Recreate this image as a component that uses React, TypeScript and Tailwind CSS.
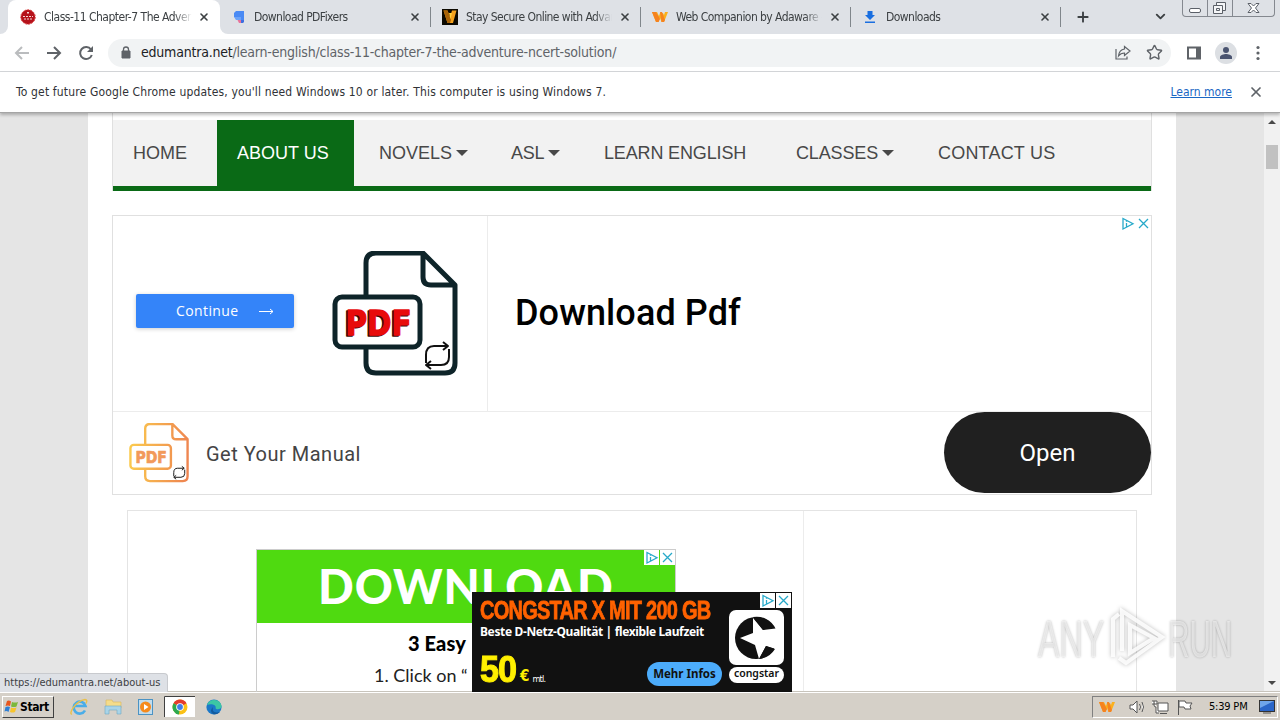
import React from 'react';
import { ChevronDown, Plus, Star, X } from 'lucide-react';

interface Tab {
  title: string;
  icon: React.ReactNode;
  box: string;
}

const SealIcon = () => (
  <svg width="16" height="16" viewBox="0 0 16 16" className="shrink-0">
    <circle cx="8" cy="8" r="7.2" fill="#b5121b" stroke="#d63a3a" strokeDasharray="2 1" />
    <path d="M3 7.500h10M4 10h8M7 3.500h2M8 3v3" stroke="#f4d6d6" strokeWidth="1" strokeDasharray="2 1" />
  </svg>
);

const FixersIcon = () => (
  <svg width="16" height="16" viewBox="0 0 16 16">
    <path d="M6 2h8v9l-3 2V8H4V4z" fill="#4a8af4" />
    <path d="M7 10h4v4H9z" fill="#e8739b" />
    <path d="M4 8h7v3H6z" fill="#6ba2f8" />
    <path d="M11 11h3v2l-1 1h-2z" fill="#3f6fe0" />
  </svg>
);

const DarkWIcon = () => (
  <svg width="16" height="16" viewBox="0 0 16 16">
    <path d="M0 0h16v16H0z" fill="#0c0900" />
    <path d="M1.500 1.500h4L8 8l2-6.500h4.500L11 14H5.500z" fill="#f5a11c" />
    <path d="M5.500 1.500L9 11l-1 3H5.500l-4-12.500z" fill="#a86206" />
    <path d="M7 4l1.500 6 1.500-6z" fill="#ffcf3a" />
  </svg>
);

const WIcon = () => (
  <svg width="16" height="16" viewBox="0 0 16 16">
    <path d="M0 3h5l2 4 1-3h3l1 2 1-3h3l-4 10h-2.500L8 9l-1.500 4H4z" fill="#fbb01c" />
    <path d="M0 3h4l4 7-1.500 3H4zM8 3h2l3 8-1 2H9.500z" fill="#f58220" />
  </svg>
);

const DownloadIcon = () => (
  <svg width="16" height="16" viewBox="0 0 16 16">
    <path d="M5.500 2h5v4H13l-5 5-5-5h2.500zM3 12.500h10V14H3z" fill="#1a6fe0" />
  </svg>
);

const tabs: Tab[] = [
  { title: 'Download PDFixers', icon: <FixersIcon />, box: 'w-[211px] pl-2.5' },
  { title: 'Stay Secure Online with Advan', icon: <DarkWIcon />, box: 'w-[210px] pl-[11px]' },
  { title: 'Web Companion by Adaware -', icon: <WIcon />, box: 'w-[210px] pl-[11px]' },
  { title: 'Downloads', icon: <DownloadIcon />, box: 'w-[210px] pl-[11px]' },
];

const TabStrip = () => (
  <div className="flex h-[34px] bg-white text-[12px] text-[#3c4043]">
    <div className="w-2 rounded-br-lg bg-[#dee1e6]" />
    <div className="flex w-[212px] items-center bg-[#dee1e6]">
      <div className="flex h-full w-full items-center rounded-t-lg bg-white pl-3">
        <SealIcon />
        <span className="ml-2 w-[148px] whitespace-nowrap tracking-[-0.5px] mask-r-from-88%">Class-11 Chapter-7 The Adver</span>
        <X size={12} strokeWidth={3.2} className="ml-1.5 shrink-0" />
      </div>
    </div>
    <div className="flex grow rounded-bl-lg bg-[#dee1e6]">
      {tabs.map((tab) => (
        <div key={tab.title} className={`flex shrink-0 items-center ${tab.box}`}>
          <span className="shrink-0">{tab.icon}</span>
          <span className="ml-2 w-[146px] whitespace-nowrap tracking-[-0.55px] mask-r-from-88%">{tab.title}</span>
          <X size={12} strokeWidth={3.2} className="ml-auto mr-[9px] shrink-0" />
          <span className="h-5 w-px bg-[#80868b]" />
        </div>
      ))}
      <Plus size={16} strokeWidth={2.8} className="ml-[14px] mt-[9px]" />
      <ChevronDown size={15} strokeWidth={3} className="ml-[62px] mt-[9px]" />
      <div className="ml-[14px] flex h-[17px] w-[93px] rounded-b border border-t-0 border-[#84888f] text-[#5b6068]">
        <svg width="91" height="16" viewBox="0 0 91 16" fill="none" stroke="currentColor">
          <path d="M24.500 0v16M49.500 0v16" stroke="#84888f" />
          <rect x="6.500" y="8.500" width="11" height="4" rx="1.500" fill="#fff" />
          <path d="M33.500 5.500v-3h9v8h-3M30.500 5.500h9v8h-9zM33.500 8.500h3v2h-3z" fill="#f4f5f7" />
          <path d="M65 3.500h3l2.500 2.500L73 3.500h3l-3.500 4.500 3.500 4.500h-3L70.500 10 68 12.500h-3l3.500-4.500z" fill="#fff" />
        </svg>
      </div>
    </div>
  </div>
);

const Toolbar = () => (
  <div className="flex h-[38px] items-center border-b border-[#d5d7da] bg-white text-[#5f6368]">
    <svg className="ml-[14px]" width="84" height="18" viewBox="0 0 84 18" fill="none" strokeWidth="2">
      <path d="M15 9H2M8 3L2 9l6 6" stroke="#babcbe" />
      <path d="M33 9h13M40 3l6 6-6 6" stroke="currentColor" />
      <path d="M77 5.500A6 6 0 1 0 77.800 11" stroke="currentColor" />
      <path d="M79 2v6h-6z" fill="currentColor" />
    </svg>
    <div className="ml-[10px] flex h-7 w-[1063px] items-center rounded-full bg-[#f1f3f4] pr-2">
      <svg width="10" height="13" viewBox="0 0 10 13" className="ml-[13px]">
        <path d="M1 5h8v7H1z" fill="currentColor" stroke="currentColor" strokeLinejoin="round" />
        <path d="M2.500 5V3.500a2.500 2.500 0 0 1 5 0V5" fill="none" stroke="currentColor" strokeWidth="1.300" />
      </svg>
      <span className="ml-[10px] whitespace-nowrap text-[14px] tracking-[-0.21px]">
        <span className="text-[#202124]">edumantra.net</span>/learn-english/class-11-chapter-7-the-adventure-ncert-solution/
      </span>
      <svg className="ml-auto" width="18" height="16" viewBox="0 0 18 16" fill="none" stroke="currentColor" strokeWidth="1.200">
        <path d="M2 4v10h11v-2.500M10.500 4V1.500L16 6l-5.500 4.500V8C8 8 6 9 4.500 11c.4-4 2.500-6.500 6-7z" />
      </svg>
      <Star size={17} strokeWidth={2} className="ml-[14px]" />
    </div>
    <svg className="ml-[15px]" width="16" height="16" viewBox="0 0 16 16">
      <path d="M1 1.500h14v13H1z" fill="currentColor" />
      <path d="M3 3.500h7v9H3z" fill="#fff" />
    </svg>
    <svg className="ml-[13px]" width="22" height="22" viewBox="0 0 22 22">
      <circle cx="11" cy="11" r="11" fill="#dcdfe3" />
      <circle cx="11" cy="8" r="3" fill="#4a5470" />
      <path d="M5 17v-2c0-2 4-3 6-3s6 1 6 3v2z" fill="#4a5470" />
    </svg>
    <svg className="ml-[19px]" width="4" height="16" viewBox="0 0 4 16" fill="currentColor">
      <circle cx="2" cy="2.500" r="1.600" />
      <circle cx="2" cy="8" r="1.600" />
      <circle cx="2" cy="13.500" r="1.600" />
    </svg>
  </div>
);

const InfoBar = () => (
  <div className="z-10 flex h-[41px] items-center border-b border-[#a5a5a5] bg-white pl-4 text-[12px] text-[#303236] shadow-[0_2px_3px_rgba(0,0,0,0.25)]">
    <span className="whitespace-nowrap tracking-[0.16px]">To get future Google Chrome updates, you'll need Windows 10 or later. This computer is using Windows 7.</span>
    <span className="ml-auto text-[#1a67c4] underline">Learn more</span>
    <X size={16} strokeWidth={2.6} className="ml-[16px] mr-[16px] text-[#5f6368]" />
  </div>
);

const Caret = () => <span className="ml-1 border-x-[6px] border-t-[6px] border-x-transparent border-t-[#484848]" />;

const menu = [
  { label: 'HOME', caret: false, box: 'w-[104px] pl-5' },
  { label: 'ABOUT US', caret: false, box: 'w-[137px] pl-5 bg-[#0a6a16] text-white' },
  { label: 'NOVELS', caret: true, box: 'w-[132px] pl-[25px]' },
  { label: 'ASL', caret: true, box: 'w-[93px] pl-[25px] tracking-[-0.3px]' },
  { label: 'LEARN ENGLISH', caret: false, box: 'w-[192px] pl-[25px] tracking-[-0.15px]' },
  { label: 'CLASSES', caret: true, box: 'w-[142px] pl-[25px] tracking-[-0.15px]' },
  { label: 'CONTACT US', caret: false, box: 'w-[170px] pl-[25px] tracking-[0.2px]' },
];

const AdChoices = ({ boxed }: { boxed?: boolean }) => (
  <svg width="32" height="16" viewBox="0 0 32 16" fill="none" stroke="#27a9c9" strokeWidth="1.300">
    {boxed && <path d="M0 0h15v15H0zM16 0h15v15H16z" fill="#fff" stroke="none" />}
    <path d="M3 2.500v10.500l10-5.300zM6.500 7v4M6.500 4.500v1.300" />
    <path d="M19 3l9 9M28 3l-9 9" />
  </svg>
);

interface PdfProps {
  size: number;
  line: string;
  label: string;
  shadow?: string;
}

const PdfFile = ({ size, line, label, shadow }: PdfProps) => (
  <svg width={size} height={size} viewBox="0 0 126 126" fill="none" stroke={line} strokeWidth="5" strokeLinejoin="round">
    {line.startsWith('url') && (
      <defs>
        <linearGradient id="amber" gradientUnits="userSpaceOnUse" x1="0" y1="60" x2="126" y2="70">
          <stop offset="0" stopColor="#fbcb4e" />
          <stop offset="1" stopColor="#ee8450" />
        </linearGradient>
      </defs>
    )}
    <path d="M34 45V12Q34 2 44 2H91L123 34V112Q123 122 113 122H44Q34 122 34 112V97M91 2V26Q91 34 99 34H123" />
    <rect x="3" y="46" width="85" height="50" rx="7" fill="#fff" />
    <g fontFamily="DejaVu Sans" fontWeight="bold" fontSize="34" strokeWidth="1.500">
      {shadow && (
        <text x="12" y="84.500" textLength="66" lengthAdjust="spacingAndGlyphs" fill={shadow} stroke={shadow}>PDF</text>
      )}
      <text x="13.500" y="84" textLength="66" lengthAdjust="spacingAndGlyphs" fill={label} stroke={label}>PDF</text>
    </g>
    <path d="M94 112V104Q94 95 102 95H115M111 91l5 4-5 4M117 98V106Q117 114 109 114H95M99 110l-5 4 5 4" stroke="#111" strokeWidth="2" />
  </svg>
);

const PdfAd = () => (
  <div className="mt-6 flex h-[280px] flex-col border border-[#e0e0e0] bg-white font-[Roboto,sans-serif]">
    <div className="flex h-[196px] border-b border-[#ececec]">
      <div className="flex w-[375px] items-center border-r border-[#ececec] pl-[23px]">
        <div className="mt-[-6px] flex h-[34px] w-[158px] items-center rounded-[2px] bg-[#3484f9] pl-10 font-['Open_Sans',sans-serif] text-[14px] tracking-[0.4px] text-white shadow-[0_1px_4px_rgba(0,0,0,0.2)]">
          Continue
          <svg className="ml-[20px]" width="15" height="8" viewBox="0 0 15 8" fill="none" stroke="#fff">
            <path d="M0 4.500h14M11 2l3 2.500L11 7" />
          </svg>
        </div>
        <div className="ml-[38px]">
          <PdfFile size={126} line="#0e2429" label="#e80b0b" shadow="#3a0808" />
        </div>
      </div>
      <div className="flex grow items-center pb-0.5 pl-[27px] text-[36px] font-medium tracking-[0.1px] text-black">Download Pdf</div>
      <div className="w-[31px]">
        <AdChoices />
      </div>
    </div>
    <div className="flex h-[82px] items-center pl-4">
      <PdfFile size={60} line="url(#amber)" label="#f2995a" />
      <span className="ml-[17px] mt-0.5 text-[20px] tracking-[0.5px] text-[#444]">Get Your Manual</span>
      <span className="ml-auto flex h-[81px] w-[207px] items-center justify-center self-start rounded-full bg-[#202020] text-[24px] text-white">Open</span>
    </div>
  </div>
);

const DownloadAd = () => (
  <div className="mx-[15px] mt-[15px] flex h-[190px] border border-b-0 border-[#e4e4e4]">
    <div className="w-[676px] border-r border-[#ececec] pl-[128px] pt-[38px]">
      <div className="relative h-[150px] w-[420px] border border-[#ccc] font-[Lato,sans-serif] text-[#222]">
        <div className="flex h-[73px] items-center bg-[#4fda10] pl-[61px] text-[47px] font-black tracking-[0.9px] text-white">DOWNLOAD</div>
        <div className="mt-[5px] pl-[151px] text-[20px] font-black tracking-[0.1px] text-black">3 Easy</div>
        <div className="mt-1 pl-[117px] text-[18px]">1. Click on “</div>
        <div className="absolute -right-[1px] top-0 h-4">
          <AdChoices boxed />
        </div>
      </div>
    </div>
  </div>
);

const CongstarAd = () => (
  <div className="absolute left-[472px] top-[592px] z-20 flex h-[100px] w-[320px] bg-[#111] text-white">
    <div className="flex w-[257px] flex-col pl-2">
      <div className="mt-[5px] h-[27px] origin-left scale-x-[0.77] whitespace-nowrap font-['Liberation_Sans_Narrow','Liberation_Sans',sans-serif] text-[26px] font-bold leading-[27px] tracking-[-1px] text-[#ff6200] [-webkit-text-stroke:0.8px_#ff6200]">CONGSTAR X MIT 200 GB</div>
      <div className="whitespace-nowrap font-['Noto_Sans',sans-serif] text-[12px] font-bold leading-[16px] tracking-[-0.36px]">Beste D-Netz-Qualität | flexible Laufzeit</div>
      <div className="mt-[14px] flex items-end">
        <span className="w-[40px] origin-left scale-x-[0.95] font-['Liberation_Sans',sans-serif] text-[36px] font-bold leading-[32px] tracking-[-1px] text-[#fff000] [-webkit-text-stroke:1px_#fff000]">50</span>
        <span className="text-[15px] font-bold leading-[20px] text-[#fff000]">€</span>
        <span className="ml-[3px] text-[9px] leading-[14px] tracking-[-0.7px]">mtl.</span>
        <span className="ml-auto mr-[7px] flex h-6 w-[75px] items-center justify-center rounded-full bg-[#4cacfb] font-['Noto_Sans',sans-serif] text-[11.5px] font-bold text-[#111]">Mehr Infos</span>
      </div>
    </div>
    <div className="mt-[18px] flex w-[55px] flex-col gap-0.5">
      <svg width="55" height="55" viewBox="0 0 55 55">
        <rect width="55" height="55" rx="7" fill="#fff" />
        <circle cx="27" cy="28" r="21" fill="#111" />
        <path d="M24 8L34 20 50 14v26L37 36 30 49 26 35 11 28 24 23z" fill="#fff" />
        <path d="M34 20L46.500 18.500A21 21 0 0 0 24 7zM37 36L46 39A21 21 0 0 1 30 49z" fill="#111" />
      </svg>
      <span className="flex h-[16px] items-center justify-center rounded-full bg-white pb-0.5 font-['Noto_Sans',sans-serif] text-[10.500px] font-semibold text-[#111]">congstar</span>
    </div>
    <div className="absolute right-0 top-px">
      <AdChoices boxed />
    </div>
  </div>
);

const Page = () => (
  <div className="flex h-[579px] overflow-hidden bg-[#e5e5e5]">
    <div className="ml-[88px] w-[1088px] bg-white px-6">
      <div className="border-x border-[#e0e0e0] pt-[7px]">
        <div className="flex h-[66px] bg-[#f2f2f2] font-['Liberation_Sans',sans-serif] text-[18px] text-[#484848]">
          {menu.map((item) => (
            <div key={item.label} className={`flex shrink-0 items-center whitespace-nowrap ${item.box}`}>
              {item.label}
              {item.caret && <Caret />}
            </div>
          ))}
        </div>
        <div className="h-[5px] bg-[#0a6a16]" />
      </div>
      <PdfAd />
      <DownloadAd />
    </div>
    <div className="ml-auto flex w-4 flex-col items-center bg-[#f1f1f1] pb-[7px] pt-[7px]">
      <span className="border-x-4 border-b-4 border-x-transparent border-b-[#484848]" />
      <span className="mt-[21px] h-6 w-3 bg-[#c1c1c1]" />
      <span className="mt-auto border-x-4 border-t-4 border-x-transparent border-t-[#484848]" />
    </div>
  </div>
);

const Watermark = () => (
  <div className="absolute left-[1038px] top-[605px] z-10 flex items-center font-['Liberation_Sans_Narrow','Liberation_Sans',sans-serif] text-[52px] leading-[64px] text-white/60 [text-shadow:0_0_3px_rgba(0,0,0,0.3)]">
    <span className="w-[68px] origin-left scale-x-[0.62]">ANY</span>
    <svg width="62" height="68" viewBox="0 0 62 68" fill="none" stroke="#fff" strokeOpacity="0.85" strokeWidth="4" className="shrink-0 drop-shadow-[0_0_2px_rgba(0,0,0,0.3)]">
      <path d="M7 52V14l6-5M16 46V6l40 26-36 26-7-5M24 20v28l24-15z" />
    </svg>
    <span className="w-[66px] origin-left scale-x-[0.57]">RUN</span>
  </div>
);

const StartFlag = () => (
  <svg width="15" height="14" viewBox="0 0 15 14">
    <path d="M3 1q2-1 4 .5L6 6Q4 5 1.500 6z" fill="#e8571e" />
    <path d="M8 2q3 1 6 0l-1.500 4.500q-2.500 1-5.500 0z" fill="#7cb83a" />
    <path d="M1.500 7Q4 6 6 7l-1.500 5q-2-1.500-4-.5z" fill="#2f7fd4" />
    <path d="M7 7.500q2.500 1 5.500 0L11 12q-2.500 1-5 0z" fill="#f7c42c" />
  </svg>
);

const TaskIcons = () => (
  <svg width="156" height="24" viewBox="0 0 156 24" className="ml-[12px]">
    {/* internet explorer */}
    <path d="M19 15.500A6 6 0 1 1 19.500 11H8" fill="none" stroke="#4aade8" strokeWidth="2.600" />
    <path d="M6 19C2 20 9 6 19 4.500q3 0 1 4" fill="none" stroke="#e9c04a" strokeWidth="1.400" />
    {/* explorer */}
    <path d="M40 5h6l1 2h8v6H40z" fill="#f5dc8a" stroke="#d9b55a" strokeWidth=".6" />
    <path d="M39 11h16v8h-4v-4h-8v4h-4z" fill="#a9d4e8" stroke="#6fa9c5" strokeWidth=".6" />
    {/* media player */}
    <rect x="72.500" y="4.500" width="14" height="15" fill="#c2dcec" stroke="#4b93c4" />
    <circle cx="79.500" cy="12" r="5.500" fill="#f68a1c" />
    <path d="M78 9l4.500 3-4.500 3z" fill="#fff" />
    {/* chrome */}
    <path d="M98 1h31v21H98z" fill="#fff" />
    <path d="M98.500 22V1.500H129" fill="none" stroke="#404040" />
    <circle cx="114" cy="12" r="7.500" fill="#fbc116" />
    <path d="M114 12L107.500 8.200A7.500 7.500 0 0 1 120.500 8.200z" fill="#e33b2e" />
    <path d="M114 12L107.500 8.200A7.500 7.500 0 0 0 113 19.500z" fill="#2da94f" />
    <circle cx="114" cy="12" r="3.800" fill="#fff" />
    <circle cx="114" cy="12" r="2.900" fill="#3f7de8" />
    {/* edge */}
    <circle cx="148" cy="12" r="7.600" fill="#1b78c8" />
    <path d="M141 10a7.600 7.600 0 0 1 14.600 1c0 4-6 4-6 2 1-3-4-5-8.600-3z" fill="#3cc6a4" />
    <path d="M147 12q-2 7 7 5-3 3-7 2-4-3 0-7z" fill="#125a9e" />
  </svg>
);

const Taskbar = () => (
  <div className="flex h-7 items-center border-t border-white bg-[#d5d0c8] pt-px shadow-[0_-1px_0_#c8c4bc]">
    <div className="ml-0.5 flex h-[22px] w-[52px] items-center gap-px border border-b-[#404040] border-l-white border-r-[#404040] border-t-white pl-px text-[12px] font-bold tracking-[-0.4px] text-black">
      <StartFlag />
      Start
    </div>
    <TaskIcons />
    <div className="ml-auto mr-0.5 flex h-[22px] w-[186px] items-center border border-b-white border-l-[#808080] border-r-white border-t-[#808080] pl-1.5 text-[11px] text-black">
      <WIcon />
      <svg width="72" height="18" viewBox="0 0 72 18" className="ml-3" fill="#fff" stroke="#555">
        <path d="M3 7h3l4-4v12l-4-4H3zM12.500 6q2 3 0 6M15 4q3 5 0 10" />
        <path d="M31 5h10v8H31zM33 15.500h7M27 3v4q0 2 2 2v6h3M25 3h5v3h-5" />
        <path d="M51.500 2v15M52 3h6l1 2h6l-2 3 1 3h-6l-1-2h-5z" />
      </svg>
      <span className="ml-[10px] whitespace-nowrap tracking-[-0.2px]">5:39 PM</span>
      <svg width="16" height="14" viewBox="0 0 16 14" className="ml-auto mr-0.5">
        <rect x=".5" y=".5" width="15" height="11" fill="#2b66c8" stroke="#333" />
        <path d="M1 1h14L1 8z" fill="#6fa5ea" />
        <path d="M4 13h8" stroke="#555" />
      </svg>
    </div>
  </div>
);

export default function App() {
  return (
    <div className="relative flex h-[720px] w-[1280px] flex-col overflow-hidden bg-white font-['DejaVu_Sans_Condensed','DejaVu_Sans',sans-serif]">
      <TabStrip />
      <Toolbar />
      <InfoBar />
      <Page />
      <CongstarAd />
      <Watermark />
      <div className="absolute left-0 top-[673px] z-10 flex h-[19px] w-[168px] items-center rounded-tr border border-b-0 border-l-0 border-[#c8cace] bg-[#dee1e6] pl-1 text-[11px] text-[#3c4043]">
        https://edumantra.net/about-us
      </div>
      <Taskbar />
    </div>
  );
}
